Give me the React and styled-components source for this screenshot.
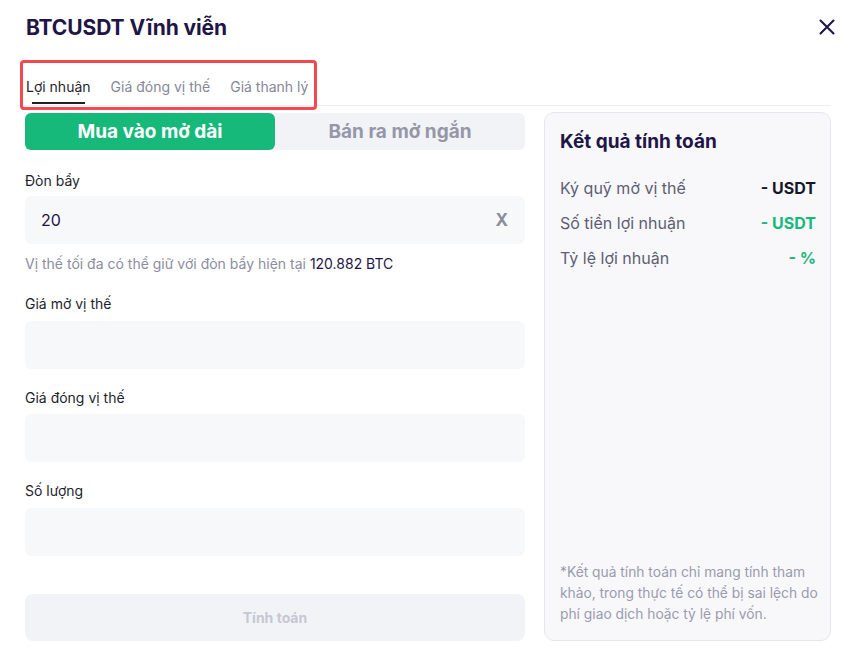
import React from "react";
import styled, { createGlobalStyle } from "styled-components";

const Global = createGlobalStyle`
  html, body { margin: 0; padding: 0; background: #fff; }
  body { font-family: Inter, "Noto Sans", "Liberation Sans", sans-serif; color: #1e1e2d; }
  * { box-sizing: border-box; }
`;

const Modal = styled.div`
  width: 855px;
  height: 657px;
  padding: 0 24px 0 25px;
  display: flex;
  flex-direction: column;
`;

const Header = styled.div`
  height: 54px;
  display: flex;
  align-items: center;
  justify-content: space-between;
  padding-left: 1px;
`;

const Title = styled.h1`
  margin: 0;
  font-size: 21px;
  font-weight: 700;
  color: #1f1547;
  letter-spacing: -0.1px;
`;

const Close = styled.button`
  border: 0;
  background: none;
  padding: 0;
  width: 16px;
  height: 16px;
  margin-right: -4px;
  display: flex;
  cursor: pointer;
`;

const TabBar = styled.div`
  position: relative;
  margin-top: 15px;
  height: 37px;
  border-bottom: 1px solid #eeeef2;
  display: flex;
  gap: 20px;
  padding-left: 1px;
`;

const Tab = styled.div`
  position: relative;
  height: 36px;
  line-height: 20px;
  padding-top: 8px;
  font-size: 14px;
  color: ${(p) => (p.$active ? "#1e1e2d" : "#85869a")};
  &::after {
    content: "";
    display: ${(p) => (p.$active ? "block" : "none")};
    position: absolute;
    left: 6px;
    right: 6px;
    bottom: 1px;
    height: 2px;
    background: #1e1e2d;
  }
`;

const Highlight = styled.div`
  position: absolute;
  left: -5px;
  top: -9px;
  width: 297px;
  height: 50px;
  border: 3px solid #f4494f;
  border-radius: 4px;
  pointer-events: none;
`;

const Main = styled.div`
  display: flex;
  gap: 19px;
  margin-top: 6px;
`;

const Left = styled.div`
  width: 500px;
  display: flex;
  flex-direction: column;
`;

const Segment = styled.div`
  margin-top: 1px;
  height: 37px;
  border-radius: 6px;
  background: #f2f3f7;
  display: flex;
`;

const SegButton = styled.div`
  flex: 1;
  border-radius: 6px;
  display: flex;
  align-items: center;
  justify-content: center;
  font-size: 19px;
  font-weight: 700;
  background: ${(p) => (p.$active ? "#17b97b" : "transparent")};
  color: ${(p) => (p.$active ? "#ffffff" : "#9597a8")};
`;

const Field = styled.div`
  display: flex;
  flex-direction: column;
  gap: ${(p) => p.$gap || 6}px;
  margin-top: ${(p) => p.$top}px;
`;

const Label = styled.div`
  font-size: 14px;
  line-height: 20px;
  color: #1e1e2d;
`;

const InputBox = styled.div`
  height: 48px;
  border-radius: 6px;
  background: #f7f8fa;
  display: flex;
  align-items: center;
  justify-content: space-between;
  padding: 0 17px 0 16px;
  font-size: 16px;
  color: #1f1547;
`;

const Clear = styled.span`
  font-size: 17px;
  font-weight: 700;
  color: #8b8c9e;
`;

const Help = styled.div`
  margin-top: 11px;
  font-size: 14px;
  line-height: 18px;
  color: #8c8da0;
  & b {
    font-weight: 400;
    color: #1f1547;
  }
`;

const CalcButton = styled.div`
  margin-top: 38px;
  height: 47px;
  border-radius: 8px;
  background: #f2f3f7;
  display: flex;
  align-items: center;
  justify-content: center;
  font-size: 14px;
  font-weight: 700;
  color: #c6c7d3;
`;

const Panel = styled.div`
  width: 287px;
  height: 529px;
  border: 1px solid #e6e7ee;
  border-radius: 10px;
  background: #f8f8fb;
  padding: 16px 12px 15px 15px;
  display: flex;
  flex-direction: column;
`;

const PanelTitle = styled.div`
  font-size: 19px;
  font-weight: 700;
  line-height: 26px;
  color: #1f1547;
`;

const Rows = styled.div`
  margin-top: 22px;
  padding-right: 2px;
  display: flex;
  flex-direction: column;
  gap: 13px;
`;

const Row = styled.div`
  display: flex;
  justify-content: space-between;
  align-items: center;
  line-height: 22px;
  font-size: 16px;
`;

const RowLabel = styled.span`
  color: #5d5e72;
`;

const RowValue = styled.span`
  font-weight: 700;
  color: ${(p) => (p.$green ? "#17b97b" : "#17172a")};
`;

const Note = styled.div`
  margin-top: auto;
  font-size: 13.8px;
  line-height: 21px;
  color: #9a9bae;
`;

const CloseIcon = () => (
  <svg width="16" height="16" viewBox="0 0 16 16" fill="none">
    <path d="M1.5 1.5L14.5 14.5M14.5 1.5L1.5 14.5" stroke="#1f1547" strokeWidth="2.1" strokeLinecap="round" />
  </svg>
);

export default function App() {
  return (
    <>
      <Global />
      <Modal>
        <Header>
          <Title>BTCUSDT Vĩnh viễn</Title>
          <Close aria-label="Đóng"><CloseIcon /></Close>
        </Header>
        <TabBar>
          <Tab $active>Lợi nhuận</Tab>
          <Tab>Giá đóng vị thế</Tab>
          <Tab>Giá thanh lý</Tab>
          <Highlight />
        </TabBar>
        <Main>
          <Left>
            <Segment>
              <SegButton $active>Mua vào mở dài</SegButton>
              <SegButton>Bán ra mở ngắn</SegButton>
            </Segment>
            <Field $top={21} $gap={5}>
              <Label>Đòn bẩy</Label>
              <InputBox>
                <span>20</span>
                <Clear>X</Clear>
              </InputBox>
            </Field>
            <Help>
              Vị thế tối đa có thể giữ với đòn bẩy hiện tại <b>120.882 BTC</b>
            </Help>
            <Field $top={21} $gap={7}>
              <Label>Giá mở vị thế</Label>
              <InputBox />
            </Field>
            <Field $top={19} $gap={6}>
              <Label>Giá đóng vị thế</Label>
              <InputBox />
            </Field>
            <Field $top={19} $gap={7}>
              <Label>Số lượng</Label>
              <InputBox />
            </Field>
            <CalcButton>Tính toán</CalcButton>
          </Left>
          <Panel>
            <PanelTitle>Kết quả tính toán</PanelTitle>
            <Rows>
              <Row>
                <RowLabel>Ký quỹ mở vị thế</RowLabel>
                <RowValue>- USDT</RowValue>
              </Row>
              <Row>
                <RowLabel>Số tiền lợi nhuận</RowLabel>
                <RowValue $green>- USDT</RowValue>
              </Row>
              <Row>
                <RowLabel>Tỷ lệ lợi nhuận</RowLabel>
                <RowValue $green>- %</RowValue>
              </Row>
            </Rows>
            <Note>
              *Kết quả tính toán chỉ mang tính tham khảo, trong thực tế có thể bị sai lệch do phí giao dịch hoặc tỷ lệ phí vốn.
            </Note>
          </Panel>
        </Main>
      </Modal>
    </>
  );
}
